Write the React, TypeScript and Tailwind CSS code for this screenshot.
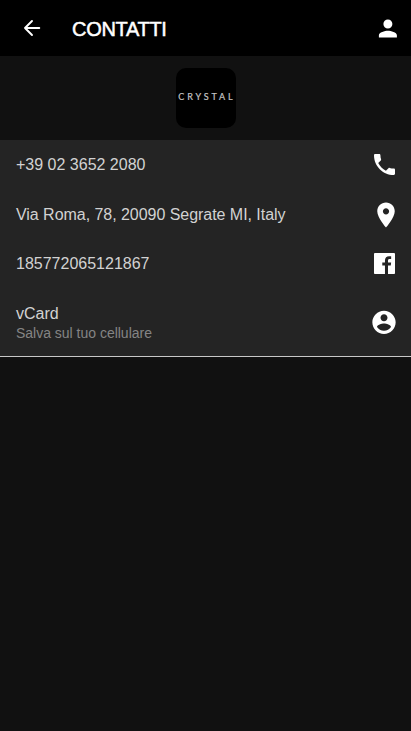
import type { ReactNode } from "react";

type RowProps = { title: string; subtitle?: string; className: string; icon: ReactNode };

function Row({ title, subtitle, className, icon }: RowProps) {
  return (
    <li className={`flex items-center justify-between pl-4 ${className}`}>
      <div className={`flex flex-col ${subtitle ? "pt-[2px]" : ""}`}>
        <span className="text-[16px] leading-5 text-[#d2d2d2]">{title}</span>
        {subtitle && (
          <span className="text-[14px] leading-[19px] tracking-[-0.01px] text-[#848484]">{subtitle}</span>
        )}
      </div>
      {icon}
    </li>
  );
}

function Icon({ d, className, viewBox = "0 0 24 24" }: { d: string; className: string; viewBox?: string }) {
  return (
    <svg viewBox={viewBox} fill="currentColor" fillRule="evenodd" className={`shrink-0 text-white ${className}`}>
      <path d={d} />
    </svg>
  );
}

const PERSON =
  "M12 12c2.21 0 4-1.79 4-4s-1.79-4-4-4-4 1.79-4 4 1.79 4 4 4zm0 2c-2.67 0-8 1.34-8 4v2h16v-2c0-2.66-5.33-4-8-4z";
const PHONE =
  "M6.62 10.79c1.44 2.83 3.76 5.14 6.59 6.59l2.2-2.2c.27-.27.67-.36 1.02-.24 1.12.37 2.33.57 3.57.57.55 0 1 .45 1 1V20c0 .55-.45 1-1 1-9.39 0-17-7.61-17-17 0-.55.45-1 1-1h3.5c.55 0 1 .45 1 1 0 1.25.2 2.45.57 3.57.11.35.03.74-.25 1.02l-2.2 2.2z";
const PLACE =
  "M12 2C8.13 2 5 5.13 5 9c0 5.25 7 13 7 13s7-7.75 7-13c0-3.87-3.13-7-7-7zm0 9.5c-1.38 0-2.5-1.12-2.5-2.5s1.12-2.5 2.5-2.5 2.5 1.12 2.5 2.5-1.12 2.5-2.5 2.5z";
const FACEBOOK =
  "M20.1 3H3.9C3.4 3 3 3.4 3 3.9v16.2c0 .5.4.9.9.9h8.5v-7.2h-2.3v-2.6h2.3V9.3c0-2.3 1.4-3.6 3.5-3.6.8 0 1.4.05 1.8.1v2.4h-1.2c-1.2 0-1.5.6-1.5 1.4v1.6h2.7l-.35 2.6H15V21h5.1c.5 0 .9-.4.9-.9V3.9c0-.5-.4-.9-.9-.9z";
const ACCOUNT =
  "M12 2C6.48 2 2 6.48 2 12s4.48 10 10 10 10-4.48 10-10S17.52 2 12 2zm0 3c1.66 0 3 1.34 3 3s-1.34 3-3 3-3-1.34-3-3 1.34-3 3-3zm0 14.2c-2.5 0-4.71-1.28-6-3.22.03-1.99 4-3.08 6-3.08 1.99 0 5.97 1.09 6 3.08-1.29 1.94-3.5 3.22-6 3.22z";

export default function App() {
  return (
    <div className="flex h-[731px] w-[411px] flex-col overflow-hidden bg-[#111111] font-['Liberation_Sans',Arial,sans-serif]">
      <header className="flex h-14 shrink-0 items-center bg-black pl-5 pr-[10px]">
        <svg
          viewBox="0 0 24 24"
          fill="none"
          stroke="white"
          strokeWidth="1.9"
          strokeLinecap="round"
          strokeLinejoin="round"
          className="size-6"
        >
          <path d="M19.3 12H5M12 5L5 12l7 7" />
        </svg>
        <h1 className="ml-7 grow pt-0.5 text-[20px] leading-6 tracking-[-0.3px] text-white [-webkit-text-stroke:0.5px_white]">
          CONTATTI
        </h1>
        <Icon d={PERSON} viewBox="-0.35 0 24 24" className="size-[27px]" />
      </header>
      <div className="flex h-[84px] shrink-0 items-center justify-center">
        <div className="flex size-[60px] items-center justify-center rounded-[10px] bg-black pb-[3px] font-[Lato,sans-serif] text-[9px] leading-3 text-[#c4c4c4] [-webkit-text-stroke:0.2px_#c4c4c4]">
          <span className="-mr-[2.9px] tracking-[2.9px]">CRYSTAL</span>
        </div>
      </div>
      <ul className="flex h-[217px] shrink-0 flex-col border-b border-[#c8c8c8] bg-[#242424]">
        <Row title="+39 02 3652 2080" className="h-[50px] pr-[13px]" icon={<Icon d={PHONE} viewBox="-0.43 0.43 24 24" className="size-7" />} />
        <Row title="Via Roma, 78, 20090 Segrate MI, Italy" className="h-[49px] pr-[10px] tracking-[-0.04px]" icon={<Icon d={PLACE} className="size-[30px]" />} />
        <Row title="185772065121867" className="h-[49px] pr-[13px]" icon={<Icon d={FACEBOOK} viewBox="-0.43 0.43 24 24" className="size-7" />} />
        <Row title="vCard" subtitle="Salva sul tuo cellulare" className="h-[68px] pr-[13.5px]" icon={<Icon d={ACCOUNT} viewBox="0 -0.3 24 24" className="size-7" />} />
      </ul>
    </div>
  );
}
